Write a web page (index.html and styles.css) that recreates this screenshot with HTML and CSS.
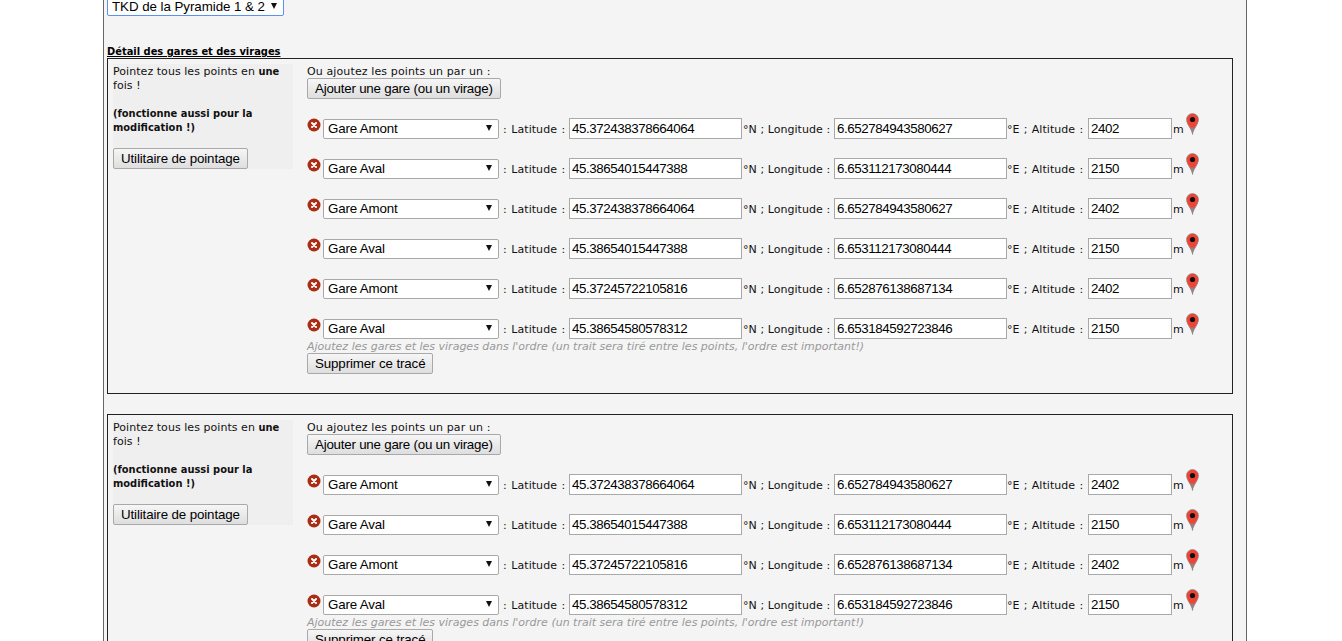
FILE: index.html
```html
<!DOCTYPE html>
<html lang="fr">
<head>
<meta charset="utf-8">
<title>Détail des gares et des virages</title>
<link rel="stylesheet" href="styles.css">
</head>
<body>
<svg class="defs" width="0" height="0">
  <symbol id="del" viewBox="0 0 14 14"><circle cx="7" cy="7" r="6.5" fill="#a92c14"/><path d="M5 5l4 4M9 5l-4 4" stroke="#fff" stroke-width="2" stroke-linecap="round"/></symbol>
  <symbol id="pin" viewBox="0 0 13 22"><path d="M6.5 21.5C6 16 .5 11.500.5 6.500a6 6 0 0 1 12 0c0 5-5.500 9.500-6 15z" fill="#ee4435" stroke="#8a8a8a" stroke-width=".7"/><path d="M6.500 21.500C6.300 18 5 16 4.200 14.500h4.600C8 16 6.700 18 6.500 21.500z" fill="#888"/><circle cx="6.500" cy="6.500" r="2.600" fill="#111"/></symbol>
</svg>
<main class="page">
  <span class="sel sel-top"><select class="pick focus"><option>TKD de la Pyramide 1 &amp; 2</option></select></span>
  <h2 class="title">Détail des gares et des virages</h2>

  <section class="box">
    <aside class="side">
      <div class="txt">Pointez tous les points en <b>une</b> fois !<br><br>
      <b>(fonctionne aussi pour la modification !)</b><br><br></div>
      <button class="btn tight" type="button">Utilitaire de pointage</button>
    </aside>
    <div class="main">
      <div class="txt intro">Ou ajoutez les points un par un :</div>
      <button class="btn tighter" type="button">Ajouter une gare (ou un virage)</button>
      <div class="rows">
        <div class="row"><svg class="del"><use href="#del"/></svg><span class="sel"><select class="pick"><option>Gare Amont</option></select></span><span class="l1">: Latitude :</span><input class="num" value="45.372438378664064"><span class="l2">°N ; Longitude :</span><input class="num" value="6.652784943580627"><span class="l3">°E ; Altitude :</span><input class="num alt" value="2402"><span class="l4">m</span><svg class="pin"><use href="#pin"/></svg></div>
        <div class="row"><svg class="del"><use href="#del"/></svg><span class="sel"><select class="pick"><option>Gare Aval</option></select></span><span class="l1">: Latitude :</span><input class="num" value="45.38654015447388"><span class="l2">°N ; Longitude :</span><input class="num" value="6.653112173080444"><span class="l3">°E ; Altitude :</span><input class="num alt" value="2150"><span class="l4">m</span><svg class="pin"><use href="#pin"/></svg></div>
        <div class="row"><svg class="del"><use href="#del"/></svg><span class="sel"><select class="pick"><option>Gare Amont</option></select></span><span class="l1">: Latitude :</span><input class="num" value="45.372438378664064"><span class="l2">°N ; Longitude :</span><input class="num" value="6.652784943580627"><span class="l3">°E ; Altitude :</span><input class="num alt" value="2402"><span class="l4">m</span><svg class="pin"><use href="#pin"/></svg></div>
        <div class="row"><svg class="del"><use href="#del"/></svg><span class="sel"><select class="pick"><option>Gare Aval</option></select></span><span class="l1">: Latitude :</span><input class="num" value="45.38654015447388"><span class="l2">°N ; Longitude :</span><input class="num" value="6.653112173080444"><span class="l3">°E ; Altitude :</span><input class="num alt" value="2150"><span class="l4">m</span><svg class="pin"><use href="#pin"/></svg></div>
        <div class="row"><svg class="del"><use href="#del"/></svg><span class="sel"><select class="pick"><option>Gare Amont</option></select></span><span class="l1">: Latitude :</span><input class="num" value="45.37245722105816"><span class="l2">°N ; Longitude :</span><input class="num" value="6.652876138687134"><span class="l3">°E ; Altitude :</span><input class="num alt" value="2402"><span class="l4">m</span><svg class="pin"><use href="#pin"/></svg></div>
        <div class="row"><svg class="del"><use href="#del"/></svg><span class="sel"><select class="pick"><option>Gare Aval</option></select></span><span class="l1">: Latitude :</span><input class="num" value="45.38654580578312"><span class="l2">°N ; Longitude :</span><input class="num" value="6.653184592723846"><span class="l3">°E ; Altitude :</span><input class="num alt" value="2150"><span class="l4">m</span><svg class="pin"><use href="#pin"/></svg></div>
      </div>
      <div class="txt hint">Ajoutez les gares et les virages dans l'ordre (un trait sera tiré entre les points, l'ordre est important!)</div>
      <button class="btn tight" type="button">Supprimer ce tracé</button>
    </div>
  </section>

  <section class="box">
    <aside class="side">
      <div class="txt">Pointez tous les points en <b>une</b> fois !<br><br>
      <b>(fonctionne aussi pour la modification !)</b><br><br></div>
      <button class="btn tight" type="button">Utilitaire de pointage</button>
    </aside>
    <div class="main">
      <div class="txt intro">Ou ajoutez les points un par un :</div>
      <button class="btn tighter" type="button">Ajouter une gare (ou un virage)</button>
      <div class="rows">
        <div class="row"><svg class="del"><use href="#del"/></svg><span class="sel"><select class="pick"><option>Gare Amont</option></select></span><span class="l1">: Latitude :</span><input class="num" value="45.372438378664064"><span class="l2">°N ; Longitude :</span><input class="num" value="6.652784943580627"><span class="l3">°E ; Altitude :</span><input class="num alt" value="2402"><span class="l4">m</span><svg class="pin"><use href="#pin"/></svg></div>
        <div class="row"><svg class="del"><use href="#del"/></svg><span class="sel"><select class="pick"><option>Gare Aval</option></select></span><span class="l1">: Latitude :</span><input class="num" value="45.38654015447388"><span class="l2">°N ; Longitude :</span><input class="num" value="6.653112173080444"><span class="l3">°E ; Altitude :</span><input class="num alt" value="2150"><span class="l4">m</span><svg class="pin"><use href="#pin"/></svg></div>
        <div class="row"><svg class="del"><use href="#del"/></svg><span class="sel"><select class="pick"><option>Gare Amont</option></select></span><span class="l1">: Latitude :</span><input class="num" value="45.37245722105816"><span class="l2">°N ; Longitude :</span><input class="num" value="6.652876138687134"><span class="l3">°E ; Altitude :</span><input class="num alt" value="2402"><span class="l4">m</span><svg class="pin"><use href="#pin"/></svg></div>
        <div class="row"><svg class="del"><use href="#del"/></svg><span class="sel"><select class="pick"><option>Gare Aval</option></select></span><span class="l1">: Latitude :</span><input class="num" value="45.38654580578312"><span class="l2">°N ; Longitude :</span><input class="num" value="6.653184592723846"><span class="l3">°E ; Altitude :</span><input class="num alt" value="2150"><span class="l4">m</span><svg class="pin"><use href="#pin"/></svg></div>
      </div>
      <div class="txt hint">Ajoutez les gares et les virages dans l'ordre (un trait sera tiré entre les points, l'ordre est important!)</div>
      <button class="btn tight" type="button">Supprimer ce tracé</button>
    </div>
  </section>
</main>
</body>
</html>
```
FILE: styles.css
```css
html, body { margin: 0; height: 641px; overflow: hidden; background: #fff; }
.defs { display: block; }
.page {
  box-sizing: border-box;
  width: 1144px;
  margin: -6px 0 0 103px;
  padding: 0 13px 0 3px;
  border-left: 1px solid #666;
  border-right: 1px solid #666;
  background: #f4f4f4;
  font: 11px/14px "DejaVu Sans", Verdana, sans-serif;
  letter-spacing: .05px;
  color: #111;
}
b, .title { font-family: "DejaVu Sans Condensed", "DejaVu Sans", sans-serif; font-weight: 700; letter-spacing: 0; }
.sel { position: relative; display: block; flex: none; }
.sel::after {
  content: "";
  position: absolute;
  right: 7px;
  top: 9px;
  border-left: 3.5px solid transparent;
  border-right: 3.5px solid transparent;
  border-top: 6px solid #111;
  pointer-events: none;
}
.sel-top { width: 177px; height: 22px; }
.pick {
  appearance: none;
  box-sizing: border-box;
  display: block;
  width: 176px;
  height: 20px;
  padding: 0 0 1px 4px;
  border: 1px solid #a9a9a9;
  border-radius: 2px;
  background: #fff;
  font: 13.33px "Liberation Sans", Arial, sans-serif;
  letter-spacing: -.15px;
  color: #000;
}
.focus { width: 177px; height: 22px; padding-top: 2px; padding-bottom: 0; border-color: #5b93ea; letter-spacing: -.05px; }
.title { margin: 29px 0 -1px; font-size: 11px; line-height: 14px; text-decoration: underline; color: #000; }
.box {
  box-sizing: border-box;
  display: flex;
  height: 336px;
  margin-bottom: 20px;
  padding: 5px;
  border: 1px solid #222;
}
.side { box-sizing: border-box; width: 180px; height: 105px; flex: none; background: #efefef; }
.main { margin-left: 14px; }
.txt { padding-top: 1px; margin-bottom: -1px; }
.intro { letter-spacing: .12px; }
.btn {
  box-sizing: border-box;
  display: block;
  height: 21px;
  padding: 0 7px 1px;
  border: 1px solid #a9a9a9;
  border-radius: 2px;
  background: linear-gradient(#f6f6f6, #dedede);
  font: 13.33px "Liberation Sans", Arial, sans-serif;
  color: #000;
  white-space: nowrap;
}
.tight { letter-spacing: -.12px; }
.tighter { letter-spacing: -.22px; }
.rows { display: flex; flex-direction: column; gap: 19px; margin-top: 19px; }
.row { display: flex; align-items: center; height: 21px; white-space: nowrap; }
.del { width: 14px; height: 14px; flex: none; margin: -7px 2px 0 0; }
.row .sel { width: 176px; }
.row .sel::after { top: 6px; right: 7px; }
.l1, .l2, .l3, .l4 { padding-top: 2px; }
.l1 { margin-left: 4px; width: 66px; word-spacing: 1px; }
.l2 { width: 91px; margin-left: 1px; }
.l3 { width: 81px; word-spacing: .7px; }
.l4 { margin-left: 1px; width: 13px; }
.num {
  box-sizing: border-box;
  width: 173px;
  height: 21px;
  padding: 0 2px 1px;
  border: 1px solid #a9a9a9;
  background: #fff;
  font: 13.33px "Liberation Sans", Arial, sans-serif;
  letter-spacing: -.41px;
  color: #000;
}
.alt { width: 84px; }
.pin { width: 13px; height: 22px; flex: none; margin-top: -9px; }
.hint { font-style: italic; color: #999; white-space: nowrap; letter-spacing: 0; }
```
